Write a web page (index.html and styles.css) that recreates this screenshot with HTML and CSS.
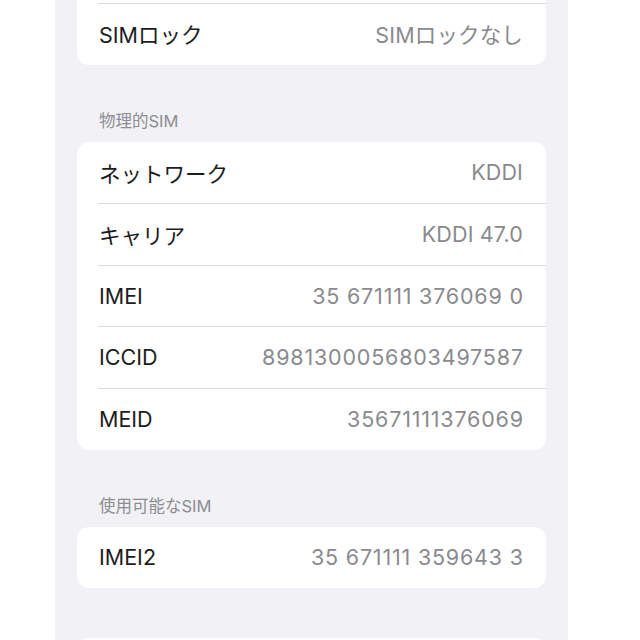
FILE: index.html
```html
<!DOCTYPE html>
<html lang="ja">
<head>
<meta charset="utf-8">
<link rel="stylesheet" href="styles.css">
</head>
<body>
<div class="panel">
  <div class="card card-first">
    <div class="row"><span class="label">&nbsp;</span><span class="value"></span></div>
    <div class="row"><span class="label">SIMロック</span><span class="value">SIMロックなし</span></div>
  </div>

  <div class="section-header">物理的SIM</div>
  <div class="card">
    <div class="row"><span class="label">ネットワーク</span><span class="value">KDDI</span></div>
    <div class="row"><span class="label">キャリア</span><span class="value">KDDI 47.0</span></div>
    <div class="row"><span class="label">IMEI</span><span class="value num">35 671111 376069 0</span></div>
    <div class="row"><span class="label">ICCID</span><span class="value num">8981300056803497587</span></div>
    <div class="row"><span class="label">MEID</span><span class="value num">35671111376069</span></div>
  </div>

  <div class="section-header">使用可能なSIM</div>
  <div class="card">
    <div class="row"><span class="label">IMEI2</span><span class="value num">35 671111 359643 3</span></div>
  </div>

  <div class="card card-last">
    <div class="row"><span class="label">&nbsp;</span><span class="value"></span></div>
  </div>
</div>
</body>
</html>
```
FILE: styles.css
```css
html, body {
  margin: 0;
  padding: 0;
  background: #ffffff;
  overflow: hidden;
  height: 640px;
}

body {
  font-family: Inter, "Noto Sans CJK JP", sans-serif;
  -webkit-font-smoothing: antialiased;
}

.panel {
  margin-left: 55px;
  width: 513px;
  box-sizing: border-box;
  padding: 0 22px 40px 22px;
  background: #f1f1f6;
  margin-top: -58.5px;
  display: flex;
  flex-direction: column;
}

.card {
  background: #ffffff;
  border-radius: 12px;
  display: flex;
  flex-direction: column;
}

.card-last {
  margin-top: 50px;
}

.row {
  height: 61.6px;
  box-sizing: border-box;
  display: flex;
  align-items: center;
  justify-content: space-between;
  padding: 0 23px 0 22px;
  position: relative;
}

.row + .row::before {
  content: "";
  position: absolute;
  top: 0;
  left: 21px;
  right: 0;
  height: 1px;
  background: #dcdce0;
}

.label {
  font-size: 21.5px;
  color: #1c1c1e;
  letter-spacing: 0;
}

.value {
  font-size: 21.5px;
  color: #8a8a8e;
  letter-spacing: 0.15px;
}

.value.num {
  letter-spacing: 0.8px;
  margin-right: -0.8px;
}

.section-header {
  font-size: 16.5px;
  color: #8d8d92;
  line-height: 20px;
  padding-left: 22px;
  margin-top: 46px;
  margin-bottom: 11px;
}
```
